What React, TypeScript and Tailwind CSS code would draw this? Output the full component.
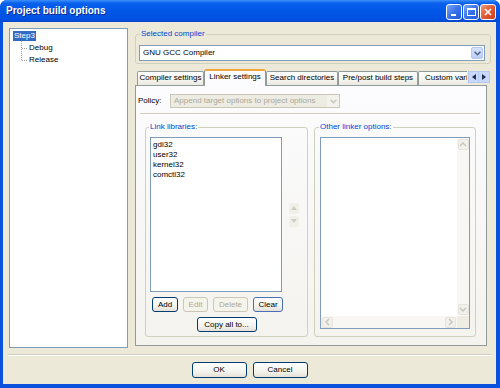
import React from "react";

const Chevron = ({ color = "#4D6185" }: { color?: string }) => (
  <svg width="7" height="5" viewBox="0 0 7 5">
    <path d="M0.6 0.8 L3.5 3.7 L6.4 0.8" fill="none" stroke={color} strokeWidth="1.5" />
  </svg>
);

const ScrollArrow = ({ dir }: { dir: "up" | "down" | "left" | "right" }) => {
  const d =
    dir === "up"
      ? "M1 5 L4 2 L7 5"
      : dir === "down"
      ? "M1 2 L4 5 L7 2"
      : dir === "left"
      ? "M5 1 L2 4 L5 7"
      : "M2 1 L5 4 L2 7";
  return (
    <div className="w-[11px] h-[11px] shrink-0 rounded-[2px] bg-[#F1F0EA] border border-[#E6E4DA] flex items-center justify-center">
      <svg width="8" height="8" viewBox="0 0 8 8">
        <path d={d} fill="none" stroke="#C7C5BB" strokeWidth="1.4" />
      </svg>
    </div>
  );
};

interface BtnProps {
  label: string;
  className: string;
  disabled?: boolean;
}

const XpButton: React.FC<BtnProps> = ({ label, className, disabled }) => (
  <div
    className={
      disabled
        ? `${className} rounded-[3px] border border-[#CBC7B8] bg-[#F5F4EA] text-[#ACA899] flex items-center justify-center`
        : `${className} rounded-[3px] border border-[#003C74] bg-[linear-gradient(180deg,#FFFFFF_0%,#F4F3EE_60%,#E3E1D6_100%)] text-black flex items-center justify-center`
    }
  >
    {label}
  </div>
);

const TreePanel = () => (
  <div className="w-[119px] h-[320px] shrink-0 bg-white border border-[#7F9DB9] pt-[2px] pl-[3px]">
    <div className="flex">
      <span className="h-[10px] px-[1px] leading-[10px] bg-[#316AC5] text-white">Step3</span>
    </div>
    <div className="flex">
      {/* dotted connectors */}
      <div className="ml-[8px] w-[1px] h-[19px] border-l border-dotted border-[#A0A0A0]" />
      <div className="flex flex-col">
        <div className="flex items-center h-[12px] mt-[1px]">
          <div className="w-[5px] border-t border-dotted border-[#A0A0A0]" />
          <span className="ml-[2px]">Debug</span>
        </div>
        <div className="flex items-center h-[12px]">
          <div className="w-[5px] border-t border-dotted border-[#A0A0A0]" />
          <span className="ml-[2px]">Release</span>
        </div>
      </div>
    </div>
  </div>
);

const tabs = [
  { label: "Compiler settings", w: "w-[67px]" },
  { label: "Linker settings", w: "w-[62px]", active: true },
  { label: "Search directories", w: "w-[72px]" },
  { label: "Pre/post build steps", w: "w-[80px]" },
  { label: "Custom variables", w: "w-[76px]" },
];

const TabStrip = () => (
  <div className="relative z-10 flex items-end h-[17px] mt-[5px] ml-[2px]">
    <div className="flex items-end w-[330px] h-[17px] overflow-hidden">
      {tabs.map((t) =>
        t.active ? (
          <div
            key={t.label}
            className={`${t.w} h-[17px] shrink-0 rounded-t-[3px] border-x border-[#919B9C] border-t-[2px] border-t-[#F0A63A] bg-[#FCFCFE] flex justify-center pt-[1px] whitespace-nowrap`}
          >
            {t.label}
          </div>
        ) : (
          <div
            key={t.label}
            className={`${t.w} h-[14px] mb-[1px] shrink-0 rounded-t-[2px] border border-b-0 border-[#919B9C] bg-[linear-gradient(180deg,#FFFFFF_0%,#F3F2EC_70%,#E9E7DE_100%)] flex justify-center pt-[1px] whitespace-nowrap`}
          >
            {t.label}
          </div>
        )
      )}
    </div>
    {/* tab scroll arrows */}
    <div className="flex mb-[3px] ml-[1px]">
      <div className="w-[11px] h-[12px] bg-[#C9D8F8] border border-[#B5C8F0] flex items-center justify-center">
        <svg width="4" height="6" viewBox="0 0 4 6">
          <path d="M4 0 L0 3 L4 6 Z" fill="#1F2C4C" />
        </svg>
      </div>
      <div className="w-[11px] h-[12px] bg-[#C9D8F8] border border-[#B5C8F0] border-l-0 flex items-center justify-center">
        <svg width="4" height="6" viewBox="0 0 4 6">
          <path d="M0 0 L4 3 L0 6 Z" fill="#1F2C4C" />
        </svg>
      </div>
    </div>
  </div>
);

const LinkerPage = () => (
  <div className="-mt-[1px] w-[352px] h-[261px] border border-[#919B9C] bg-[linear-gradient(180deg,#FCFCFE_0%,#F4F3EE_100%)]">
    {/* Policy */}
    <div className="flex items-center mt-[8px] pl-[2px]">
      <span className="w-[32px]">Policy:</span>
      <div className="w-[170px] h-[14px] border border-[#C9C7BA] bg-[#EDECE3] flex items-center">
        <span className="flex-1 pl-[3px] text-[#ACA899] whitespace-nowrap">Append target options to project options</span>
        <div className="w-[12px] h-[12px] flex items-center justify-center bg-[#F3F2EC]">
          <Chevron color="#C9C7BA" />
        </div>
      </div>
    </div>

    <div className="mt-[5px] ml-[4px] w-[340px] h-[2px] border-t border-[#D0CDBE] border-b border-b-white" />

    {/* Groups */}
    <div className="flex mt-[7px] ml-[9px] gap-[6px]">
      <fieldset className="w-[163px] border border-[#D0D0BF] rounded-[3px] px-[4px] pb-[4px] flex flex-col">
        <legend className="-ml-[1px] px-[1px] leading-[10px] text-[#0046D5]">Link libraries:</legend>
        <div className="flex items-center mt-[5px]">
          <div className="w-[132px] h-[155px] bg-white border border-[#7F9DB9] pt-[2px] pl-[2px] flex flex-col">
            <span>gdi32</span>
            <span>user32</span>
            <span>kernel32</span>
            <span>comctl32</span>
          </div>
          <div className="ml-[7px] flex flex-col gap-[2px] w-[10px]">
            <div className="h-[11px] rounded-[2px] bg-[#F0EFE8] flex items-center justify-center">
              <svg width="6" height="4" viewBox="0 0 6 4">
                <path d="M0 4 L3 0 L6 4 Z" fill="#CFCDC3" />
              </svg>
            </div>
            <div className="h-[11px] rounded-[2px] bg-[#F0EFE8] flex items-center justify-center">
              <svg width="6" height="4" viewBox="0 0 6 4">
                <path d="M0 0 L3 4 L6 0 Z" fill="#CFCDC3" />
              </svg>
            </div>
          </div>
        </div>
        <div className="flex mt-[5px] ml-[2px] gap-[5px]">
          <XpButton label="Add" className="w-[26px] h-[15px]" />
          <XpButton label="Edit" className="w-[25px] h-[15px]" disabled />
          <XpButton label="Delete" className="w-[35px] h-[15px]" disabled />
          <XpButton label="Clear" className="w-[30px] h-[15px] border-[#4A6FB5]" />
        </div>
        <div className="flex justify-center mt-[5px]">
          <XpButton label="Copy all to..." className="w-[60px] h-[15px]" />
        </div>
      </fieldset>

      <fieldset className="w-[162px] border border-[#D0D0BF] rounded-[3px] px-[5px] flex flex-col">
        <legend className="-ml-[1px] px-[1px] leading-[10px] text-[#0046D5]">Other linker options:</legend>
        <div className="mt-[5px] w-[150px] h-[192px] bg-white border border-[#7F9DB9] flex flex-col">
          <div className="flex flex-1">
            <div className="flex-1" />
            <div className="w-[12px] bg-[#F8F7F3] flex flex-col items-center justify-between py-[1px]">
              <ScrollArrow dir="up" />
              <ScrollArrow dir="down" />
            </div>
          </div>
          <div className="flex h-[12px]">
            <div className="flex-1 bg-[#F8F7F3] flex items-center justify-between px-[1px]">
              <ScrollArrow dir="left" />
              <ScrollArrow dir="right" />
            </div>
            <div className="w-[12px] bg-[#EFEDE3]" />
          </div>
        </div>
      </fieldset>
    </div>
  </div>
);

const App = () => {
  return (
    <div className="w-[500px] h-[388px] rounded-t-[7px] overflow-hidden bg-[#0A52DE] flex flex-col font-['Liberation_Sans',Arial,sans-serif] text-[8px] leading-[10px] text-black">
      {/* Title bar */}
      <div className="h-[22px] shrink-0 flex items-center pl-[6px] pr-[4px] bg-[linear-gradient(180deg,#3D8FF8_0%,#0A61EE_14%,#0056E6_50%,#0052E2_88%,#0045CC_100%)]">
        <span className="text-white font-bold text-[10px] leading-[12px] [text-shadow:1px_1px_0_#0B2A8C]">
          Project build options
        </span>
        <div className="ml-auto flex gap-[1px] mt-[2px]">
          <div className="w-[16px] h-[16px] rounded-[3px] border border-white bg-[linear-gradient(135deg,#7BA6F9_0%,#3A72EA_50%,#2258D8_100%)] flex items-end pl-[4px] pb-[3px]">
            <div className="w-[5px] h-[2px] bg-white" />
          </div>
          <div className="w-[16px] h-[16px] rounded-[3px] border border-white bg-[linear-gradient(135deg,#7BA6F9_0%,#3A72EA_50%,#2258D8_100%)] flex items-center justify-center">
            <div className="w-[9px] h-[8px] border border-white border-t-[2px]" />
          </div>
          <div className="w-[16px] h-[16px] rounded-[3px] border border-white bg-[linear-gradient(135deg,#EE9A7E_0%,#E05A35_50%,#C8401B_100%)] flex items-center justify-center">
            <svg width="8" height="8" viewBox="0 0 8 8">
              <path d="M1 1 L7 7 M7 1 L1 7" stroke="white" strokeWidth="1.6" />
            </svg>
          </div>
        </div>
      </div>

      {/* Client area */}
      <div className="flex-1 ml-[3px] mr-[4px] mb-[4px] bg-[#ECE9D8] flex flex-col">
        <div className="flex pt-[6px] pl-[6px]">
          <TreePanel />

          <div className="ml-[7px] w-[356px] flex flex-col">
            {/* Selected compiler */}
            <fieldset className="mt-[1px] border border-[#D0D0BF] rounded-[3px] px-[3px] pb-[2px]">
              <legend className="ml-[1px] px-[1px] leading-[10px] text-[#0046D5]">Selected compiler</legend>
              <div className="mt-[6px] h-[16px] w-[346px] bg-white border border-[#7F9DB9] flex items-center">
                <span className="flex-1 pl-[3px]">GNU GCC Compiler</span>
                <div className="w-[12px] h-[12px] mr-[1px] rounded-[2px] bg-[linear-gradient(180deg,#D6E2FC_0%,#BBCDF7_100%)] border border-[#B3C7F1] flex items-center justify-center">
                  <Chevron />
                </div>
              </div>
            </fieldset>

            <TabStrip />
            <LinkerPage />
          </div>
        </div>

        <div className="mt-[6px] ml-[5px] mr-[4px] h-[2px] border-t border-[#D0CDBE] border-b border-b-white" />

        <div className="flex justify-center gap-[6px] mt-[6px]">
          <XpButton label="OK" className="w-[55px] h-[16px]" />
          <XpButton label="Cancel" className="w-[55px] h-[16px]" />
        </div>
      </div>
    </div>
  );
};

export default App;
